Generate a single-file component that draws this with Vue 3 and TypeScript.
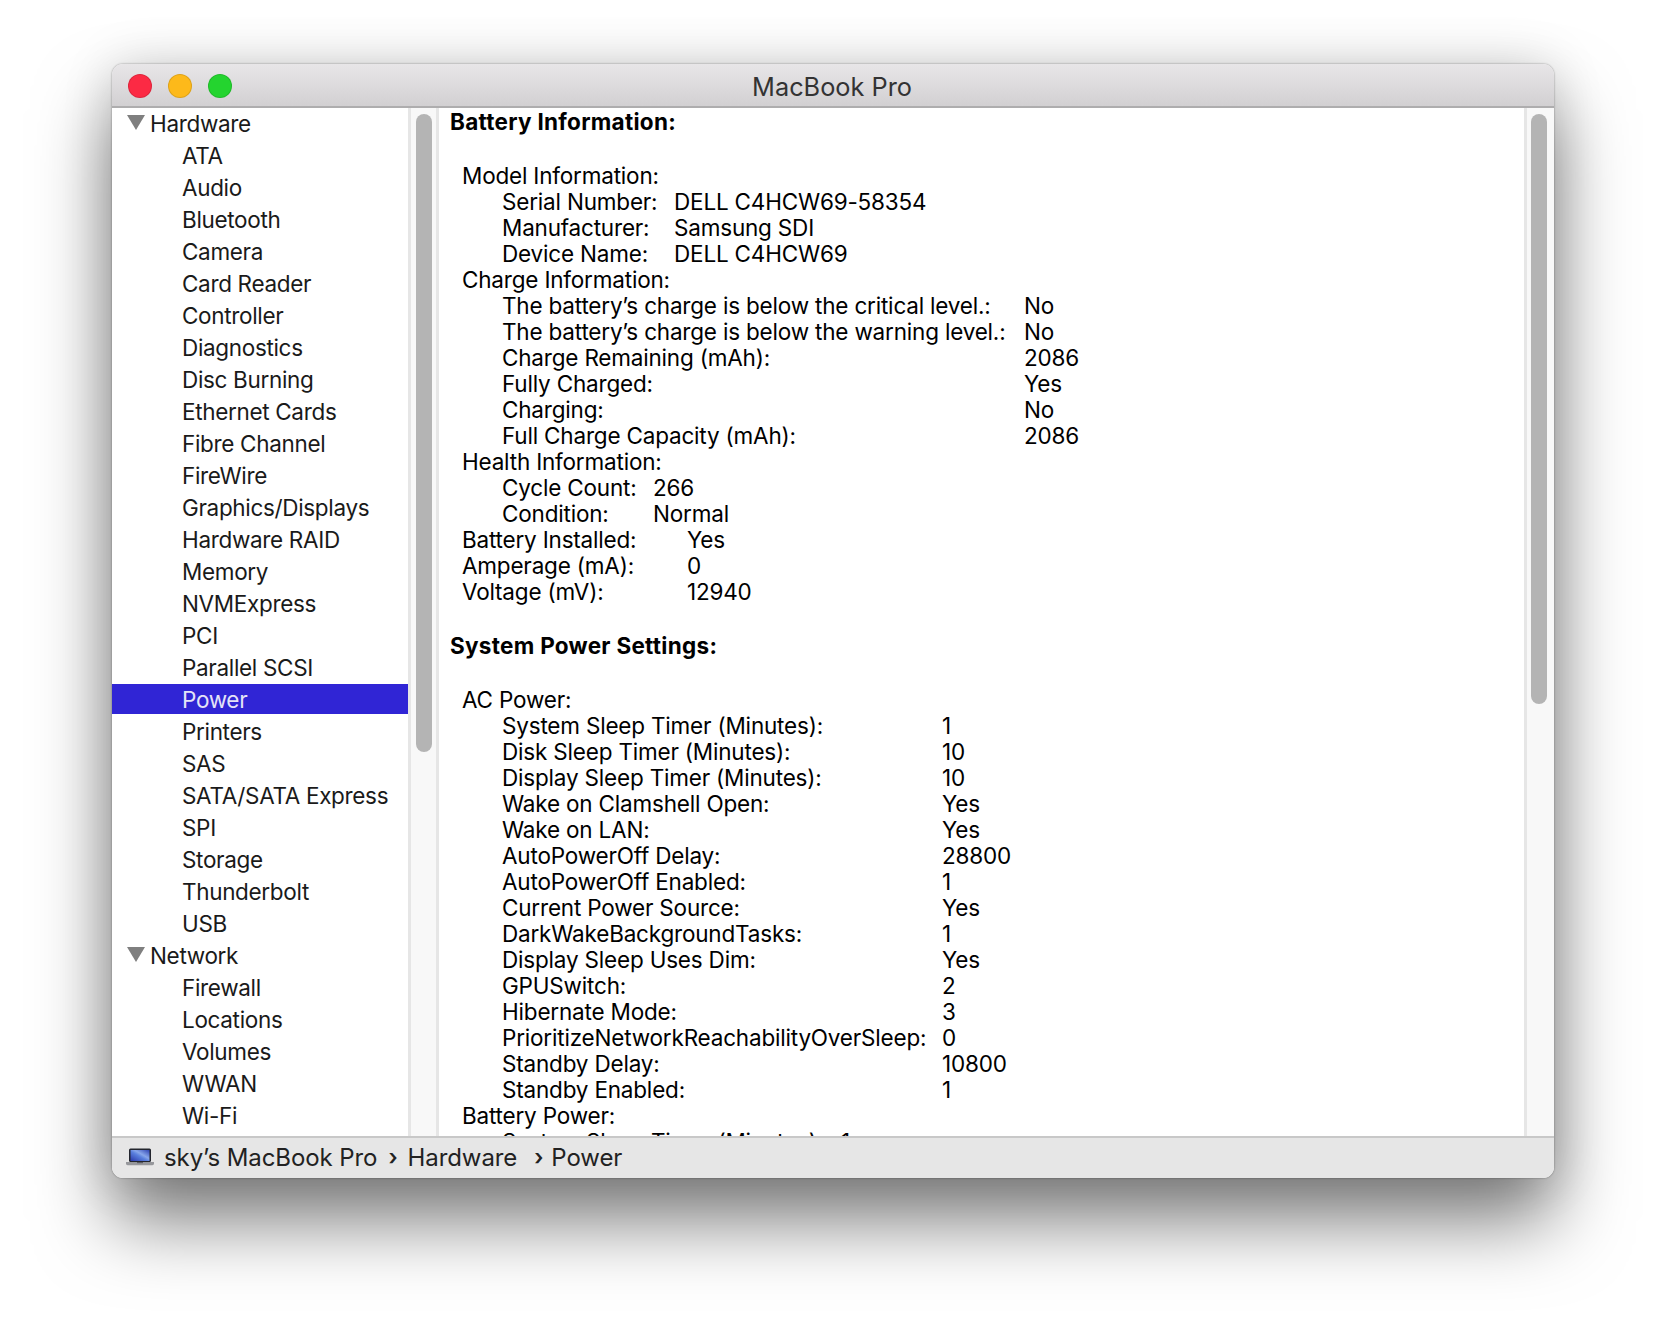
<script setup lang="ts">
interface Table {
  indent?: boolean
  labelWidth: number
  rows: [string, string?][]
}
interface Section {
  heading: string
  tables: Table[]
}

const hardware = [
  'ATA', 'Audio', 'Bluetooth', 'Camera', 'Card Reader', 'Controller', 'Diagnostics', 'Disc Burning',
  'Ethernet Cards', 'Fibre Channel', 'FireWire', 'Graphics/Displays', 'Hardware RAID', 'Memory',
  'NVMExpress', 'PCI', 'Parallel SCSI', 'Power', 'Printers', 'SAS', 'SATA/SATA Express', 'SPI',
  'Storage', 'Thunderbolt', 'USB',
]
const network = ['Firewall', 'Locations', 'Volumes', 'WWAN', 'Wi-Fi']
const tree = [
  { name: 'Hardware', items: hardware },
  { name: 'Network', items: network },
]
const selected = 'Power'

const report: Section[] = [
  {
    heading: 'Battery Information:',
    tables: [
      { labelWidth: 225, rows: [['Model Information:']] },
      {
        indent: true,
        labelWidth: 172,
        rows: [
          ['Serial Number:', 'DELL C4HCW69-58354'],
          ['Manufacturer:', 'Samsung SDI'],
          ['Device Name:', 'DELL C4HCW69'],
        ],
      },
      { labelWidth: 225, rows: [['Charge Information:']] },
      {
        indent: true,
        labelWidth: 522,
        rows: [
          ['The battery’s charge is below the critical level.:', 'No'],
          ['The battery’s charge is below the warning level.:', 'No'],
          ['Charge Remaining (mAh):', '2086'],
          ['Fully Charged:', 'Yes'],
          ['Charging:', 'No'],
          ['Full Charge Capacity (mAh):', '2086'],
        ],
      },
      { labelWidth: 225, rows: [['Health Information:']] },
      {
        indent: true,
        labelWidth: 151,
        rows: [
          ['Cycle Count:', '266'],
          ['Condition:', 'Normal'],
        ],
      },
      {
        labelWidth: 225,
        rows: [
          ['Battery Installed:', 'Yes'],
          ['Amperage (mA):', '0'],
          ['Voltage (mV):', '12940'],
        ],
      },
    ],
  },
  {
    heading: 'System Power Settings:',
    tables: [
      { labelWidth: 225, rows: [['AC Power:']] },
      {
        indent: true,
        labelWidth: 440,
        rows: [
          ['System Sleep Timer (Minutes):', '1'],
          ['Disk Sleep Timer (Minutes):', '10'],
          ['Display Sleep Timer (Minutes):', '10'],
          ['Wake on Clamshell Open:', 'Yes'],
          ['Wake on LAN:', 'Yes'],
          ['AutoPowerOff Delay:', '28800'],
          ['AutoPowerOff Enabled:', '1'],
          ['Current Power Source:', 'Yes'],
          ['DarkWakeBackgroundTasks:', '1'],
          ['Display Sleep Uses Dim:', 'Yes'],
          ['GPUSwitch:', '2'],
          ['Hibernate Mode:', '3'],
          ['PrioritizeNetworkReachabilityOverSleep:', '0'],
          ['Standby Delay:', '10800'],
          ['Standby Enabled:', '1'],
        ],
      },
      { labelWidth: 225, rows: [['Battery Power:']] },
      { indent: true, labelWidth: 339, rows: [['System Sleep Timer (Minutes):', '1']] },
    ],
  },
]
</script>

<template>
  <div class="page">
    <div class="window">
      <header class="titlebar">
        <div class="lights">
          <span class="light red"></span>
          <span class="light yellow"></span>
          <span class="light green"></span>
        </div>
        <div class="title">MacBook Pro</div>
      </header>

      <div class="main">
        <aside class="sidebar">
          <ul class="tree">
            <template v-for="group in tree" :key="group.name">
              <li class="row parent"><span class="arrow"></span>{{ group.name }}</li>
              <li v-for="item in group.items" :key="item" class="row child" :class="{ active: item === selected }">
                {{ item }}
              </li>
            </template>
          </ul>
        </aside>
        <div class="gutter left"><div class="thumb short"></div></div>

        <div class="content">
          <section v-for="section in report" :key="section.heading" class="section">
            <h2>{{ section.heading }}</h2>
            <div
              v-for="(table, i) in section.tables"
              :key="i"
              class="table"
              :class="{ indent: table.indent }"
              :style="{ gridTemplateColumns: table.labelWidth + 'px auto' }"
            >
              <template v-for="row in table.rows" :key="row[0]">
                <div>{{ row[0] }}</div>
                <div>{{ row[1] }}</div>
              </template>
            </div>
          </section>
        </div>
        <div class="gutter right"><div class="thumb long"></div></div>
      </div>

      <footer class="pathbar">
        <svg class="laptop" width="28" height="18" viewBox="0 0 28 18">
          <defs>
            <linearGradient id="screen" x1="0" y1="1" x2="1" y2="0">
              <stop offset="0" stop-color="#2a38aa" />
              <stop offset="0.45" stop-color="#5a80de" />
              <stop offset="0.6" stop-color="#88a6ea" />
              <stop offset="1" stop-color="#3044b4" />
            </linearGradient>
          </defs>
          <rect x="3" y="0.5" width="22" height="13.5" rx="1.5" fill="#23262e" />
          <rect x="4.5" y="2" width="19" height="11" fill="url(#screen)" />
          <path d="M0 14h28v1.6c0 .9-.8 1.6-1.6 1.6H1.6C.8 17.2 0 16.5 0 15.6z" fill="#96979b" />
          <rect x="11" y="14" width="6" height="1.2" fill="#5a5c61" />
        </svg>
        <span class="crumb">sky’s MacBook Pro</span>
        <span class="sep first">›</span>
        <span class="crumb second">Hardware</span>
        <span class="sep">›</span>
        <span class="crumb">Power</span>
      </footer>
    </div>
  </div>
</template>

<style>
html,
body {
  margin: 0;
  background: #fff;
}
</style>

<style scoped>
.page {
  width: 1666px;
  height: 1338px;
  box-sizing: border-box;
  padding: 64px 0 0 112px;
  overflow: hidden;
  font-family: Inter, "Liberation Sans", sans-serif;
  color: #111;
}

.window {
  width: 1442px;
  height: 1114px;
  display: flex;
  flex-direction: column;
  border-radius: 11px;
  overflow: hidden;
  background: #fff;
  box-shadow: 0 0 2px rgba(0, 0, 0, 0.45), 0 0 52px rgba(0, 0, 0, 0.14), 0 44px 74px rgba(0, 0, 0, 0.5);
}

.titlebar {
  height: 44px;
  flex: none;
  box-sizing: border-box;
  padding-top: 2px;
  display: flex;
  align-items: center;
  position: relative;
  background: linear-gradient(#e8e6e8, #d2d0d2);
  border-bottom: 2px solid #aeadae;
}

.lights {
  display: flex;
  gap: 16px;
  padding-left: 16px;
}

.light {
  width: 24px;
  height: 24px;
  box-sizing: border-box;
  border-radius: 50%;
  border: 1px solid rgba(0, 0, 0, 0.12);
}

.red { background: #fc2a44; }
.yellow { background: #fdb91a; }
.green { background: #24d42f; }

.title {
  position: absolute;
  left: 0;
  right: 0;
  text-align: center;
  font-size: 25.3px;
  color: #333;
  margin-left: -2px;
}

.main {
  flex: 1;
  min-height: 0;
  display: flex;
}

.sidebar {
  width: 296px;
  flex: none;
  overflow: hidden;
}

.tree {
  list-style: none;
  margin: 0;
  padding: 0;
  display: flex;
  flex-direction: column;
  gap: 2px;
}

.row {
  height: 30px;
  flex: none;
  box-sizing: border-box;
  padding-top: 1px;
  display: flex;
  align-items: center;
  font-size: 22.5px;
  letter-spacing: -0.33px;
  color: #1a1a1a;
  white-space: nowrap;
}

.parent {
  padding-left: 15px;
}

.arrow {
  width: 0;
  height: 0;
  border-left: 9px solid transparent;
  border-right: 9px solid transparent;
  border-top: 15px solid #7f7f7f;
  margin-right: 5px;
  margin-top: -2px;
}

.child {
  padding-left: 70px;
}

.active {
  background: #3025d5;
  color: #e4e3f7;
}

.gutter {
  flex: none;
  box-sizing: border-box;
  background: #f8f8f8;
  border-left: 3px solid #e6e6e6;
  padding-top: 6px;
}

.gutter.left {
  width: 31px;
  padding-left: 5px;
  border-right: 3px solid #e6e6e6;
}

.gutter.right {
  width: 30px;
  padding-left: 4px;
}

.thumb {
  width: 16px;
  border-radius: 8px;
  background: #b4b4b4;
}

.thumb.short { height: 638px; }
.thumb.long { height: 590px; }

.content {
  flex: 1;
  min-width: 0;
  padding: 1px 0 0 11px;
  overflow: hidden;
  font-size: 22.5px;
  line-height: 26px;
  letter-spacing: -0.19px;
  color: #000;
}

.section h2 {
  margin: 0 0 28px;
  font-size: 22.5px;
  line-height: 26px;
  font-weight: 700;
  letter-spacing: 0.28px;
}

.section + .section {
  margin-top: 28px;
}

.table {
  display: grid;
  padding-left: 12px;
  white-space: nowrap;
}

.table.indent {
  padding-left: 52px;
}

.pathbar {
  height: 42px;
  flex: none;
  box-sizing: border-box;
  display: flex;
  align-items: center;
  padding: 0 0 2px 14px;
  background: #e6e6e6;
  border-top: 2px solid #c8c8c8;
  font-size: 24px;
  letter-spacing: -0.08px;
  color: #222;
}

.laptop {
  margin-right: 10px;
}

.sep {
  font-size: 22px;
  font-weight: 600;
  margin: 0 8px;
}

.sep.first {
  margin: 0 10px 0 11px;
}

.crumb.second {
  margin-right: 9px;
}
</style>
